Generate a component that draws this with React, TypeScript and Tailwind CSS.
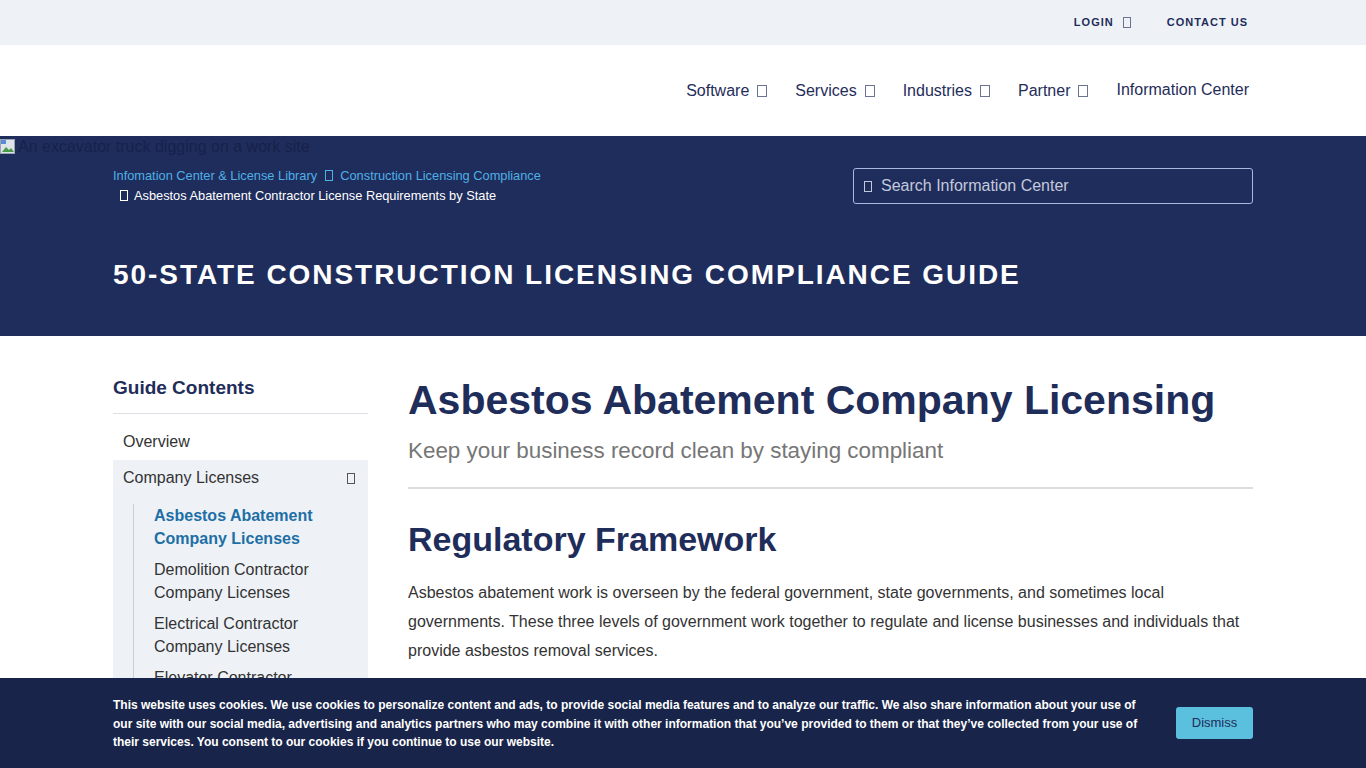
const Tofu = ({ className = "" }: { className?: string }) => (
  <span className={`inline-block h-[11px] w-[8px] border border-current align-[-1px] ${className}`} />
);

const subItems = [
  { label: "Asbestos Abatement Company Licenses", active: true },
  { label: "Demolition Contractor Company Licenses" },
  { label: "Electrical Contractor Company Licenses" },
  { label: "Elevator Contractor Company Licenses" },
  { label: "General Contractor Company Licenses" },
];

export default function App() {
  return (
    <div className="min-h-screen bg-white font-['Liberation_Sans',Arial,sans-serif] text-[#333]">
      {/* top utility bar */}
      <div className="h-[45px] bg-[#eef2f7]">
        <div className="mx-auto flex h-full w-[1140px] items-center justify-end gap-[36px] pr-[5px] text-[11px] font-bold tracking-[1px] text-[#1f2d5a]">
          <span className="flex items-center gap-[9px]">
            LOGIN <Tofu className="text-[#6b7590]" />
          </span>
          <span>CONTACT US</span>
        </div>
      </div>

      {/* main nav */}
      <div className="h-[91px] bg-white">
        <div className="mx-auto flex h-full w-[1140px] items-center justify-end gap-[28px] pr-[4px] text-[16px] text-[#1f2d5a]">
          {["Software", "Services", "Industries", "Partner"].map((n) => (
            <span key={n} className="flex items-center gap-[8px]">
              {n} <Tofu className="h-[12px] w-[10px] text-[#6b7590]" />
            </span>
          ))}
          <span className="-mt-[2px]">Information Center</span>
        </div>
      </div>

      {/* hero */}
      <div className="h-[200px] bg-[#1f2d5c]">
        <div className="flex h-[22px] items-center gap-[2px] text-[16px] text-[#17214b]">
          <svg width="16" height="16" viewBox="0 0 16 16">
            <rect x="0.5" y="0.5" width="14" height="14" fill="#dfe4ea" stroke="#9aa4b0" />
            <path d="M2 13 L6 8 L9 11 L11 9 L14 13 Z" fill="#4a9a4a" />
            <rect x="1" y="1" width="5" height="4" fill="#5a8bd0" />
          </svg>
          <span>An excavator truck digging on a work site</span>
        </div>
        <div className="mx-auto w-[1140px]">
          <div className="flex items-start justify-between">
            <div className="pt-[8px] text-[12.8px] leading-[20px]">
              <div className="text-[#4fb0e6]">
                Infomation Center &amp; License Library <Tofu className="mx-[4px] text-[#4fb0e6]" /> Construction Licensing Compliance
              </div>
              <div className="pl-[7px] text-white">
                <Tofu className="mr-[6px] text-white" />Asbestos Abatement Contractor License Requirements by State
              </div>
            </div>
            <div className="mt-[10px] flex h-[36px] w-[400px] items-center gap-[9px] rounded-[3px] border border-[#a9b8de] px-[10px] text-[16px] text-[#c3c9dc]">
              <Tofu className="text-[#c3c9dc]" />
              <span>Search Information Center</span>
            </div>
          </div>
          <h1 className="mt-[48px] text-[28px] font-bold tracking-[1.95px] text-white">
            50-STATE CONSTRUCTION LICENSING COMPLIANCE GUIDE
          </h1>
        </div>
      </div>

      {/* body */}
      <div className="mx-auto flex w-[1140px] gap-[40px] pt-[40px]">
        <aside className="w-[255px] shrink-0">
          <h3 className="border-b border-[#dcdfe4] pb-[13px] text-[19px] font-bold leading-[24px] text-[#1f2d5a]">
            Guide Contents
          </h3>
          <div className="px-[10px] pb-[6px] pt-[16px] text-[16px] leading-[24px]">Overview</div>
          <div className="bg-[#eef2f7] pb-[20px]">
            <div className="flex items-center justify-between px-[10px] py-[6px] text-[16px] leading-[24px]">
              <span>Company Licenses</span>
              <Tofu className="mr-[3px] text-[#555]" />
            </div>
            <ul className="ml-[20px] mt-[8px] border-l border-[#c9ced6] pl-[20px] text-[16px] leading-[23px]">
              {subItems.map((s) => (
                <li
                  key={s.label}
                  className={`mb-[8px] pr-[30px] ${s.active ? "font-bold text-[#1d6fa5]" : "text-[#333]"}`}
                >
                  {s.label}
                </li>
              ))}
            </ul>
          </div>
        </aside>

        <main className="flex-1 pb-[120px]">
          <h1 className="-mt-[1px] text-[41px] font-bold leading-[50px] text-[#1f2d5a]">
            Asbestos Abatement Company Licensing
          </h1>
          <p className="mt-[14px] text-[22.4px] leading-[24px] text-[#767676]">
            Keep your business record clean by staying compliant
          </p>
          <hr className="mt-[24px] border-t-2 border-[#dcdcdc]" />
          <h2 className="mt-[30px] text-[34px] font-bold leading-[40px] text-[#1f2d5a]">Regulatory Framework</h2>
          <p className="mt-[19px] text-[16px] leading-[29px] text-[#333]">
            Asbestos abatement work is overseen by the federal government, state governments, and sometimes local
            governments. These three levels of government work together to regulate and license businesses and
            individuals that provide asbestos removal services.
          </p>
          <p className="mt-[16px] text-[16px] leading-[29px] text-[#333]">
            The federal Environmental Protection Agency sets the baseline standards for asbestos work, and states
            administer their own licensing and certification programs.
          </p>
        </main>
      </div>

      {/* cookie banner */}
      <div className="fixed bottom-0 left-0 right-0 h-[90px] bg-[#19244a]">
        <div className="mx-auto flex h-full w-[1140px] items-center justify-between">
          <p className="mt-[2px] w-[1035px] text-[12px] font-bold leading-[18.5px] text-white">
            This website uses cookies. We use cookies to personalize content and ads, to provide social media features
            and to analyze our traffic. We also share information about your use of our site with our social media,
            advertising and analytics partners who may combine it with other information that you’ve provided to them
            or that they’ve collected from your use of their services. You consent to our cookies if you continue to use
            our website.
          </p>
          <button className="h-[32px] w-[77px] rounded-[3px] bg-[#5bc0de] text-[13px] text-[#1f2d5a]">Dismiss</button>
        </div>
      </div>
    </div>
  );
}
